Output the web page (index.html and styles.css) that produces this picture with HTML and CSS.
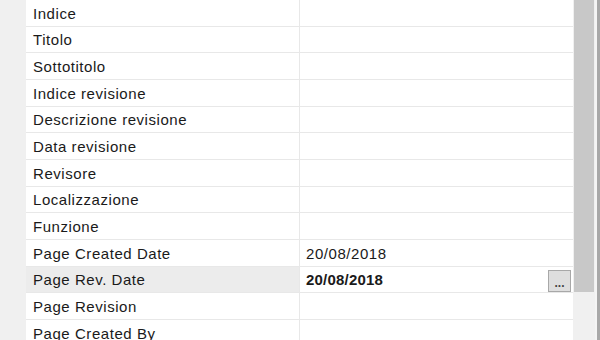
FILE: index.html
```html
<!DOCTYPE html>
<html>
<head>
<meta charset="utf-8">
<link rel="stylesheet" href="styles.css">
</head>
<body>
<div class="panel">
  <div class="gutter"></div>
  <div class="grid">
    <div class="row"><div class="name">Indice</div><div class="value"></div></div>
    <div class="row"><div class="name">Titolo</div><div class="value"></div></div>
    <div class="row"><div class="name">Sottotitolo</div><div class="value"></div></div>
    <div class="row"><div class="name">Indice revisione</div><div class="value"></div></div>
    <div class="row"><div class="name">Descrizione revisione</div><div class="value"></div></div>
    <div class="row"><div class="name">Data revisione</div><div class="value"></div></div>
    <div class="row"><div class="name">Revisore</div><div class="value"></div></div>
    <div class="row"><div class="name">Localizzazione</div><div class="value"></div></div>
    <div class="row"><div class="name">Funzione</div><div class="value"></div></div>
    <div class="row"><div class="name">Page Created Date</div><div class="value">20/08/2018</div></div>
    <div class="row selected"><div class="name">Page Rev. Date</div><div class="value bold">20/08/2018<span class="dots">...</span></div></div>
    <div class="row"><div class="name">Page Revision</div><div class="value"></div></div>
    <div class="row"><div class="name">Page Created By</div><div class="value"></div></div>
  </div>
  <div class="scrollbar"><div class="thumb"></div></div>
  <div class="edge"></div>
</div>
</body>
</html>
```
FILE: styles.css
```css
html, body {
  margin: 0;
  padding: 0;
  background: #ffffff;
  overflow: hidden;
}
.panel {
  display: flex;
  width: 600px;
  height: 340px;
  font-family: "Liberation Sans", Arial, sans-serif;
  font-size: 15px;
  letter-spacing: 0.55px;
  color: #1a1a1a;
}
.gutter {
  width: 26px;
  background: #f0f0f0;
  flex: none;
}
.grid {
  width: 547px;
  flex: none;
  background: #fff;
}
.row {
  display: grid;
  grid-template-columns: 273px 1fr;
  height: 26.67px;
  box-sizing: border-box;
  border-bottom: 1px solid #e8e8e8;
}
.name {
  padding-left: 7px;
  display: flex;
  align-items: center;
  padding-top: 1px;
}
.value {
  border-left: 1px solid #e8e8e8;
  padding-left: 6px;
  display: flex;
  align-items: center;
  padding-top: 1px;
  position: relative;
}
.selected .name {
  background: #ececec;
}
.bold {
  font-weight: bold;
  letter-spacing: 0.2px;
}
.dots {
  position: absolute;
  right: 2px;
  top: 3px;
  width: 23px;
  height: 22px;
  box-sizing: border-box;
  border: 1px solid #a8a8a8;
  background: #dedede;
  font-weight: bold;
  font-size: 12px;
  letter-spacing: 0;
  line-height: 24px;
  text-align: center;
  color: #444;
}
.scrollbar {
  width: 22px;
  flex: none;
  background: #f0f0f0;
}
.thumb {
  height: 292px;
  background: #c8c8c8;
  margin: 0 1px;
}
.edge {
  flex: 1;
  background: linear-gradient(to right, #f4f4f4 0 2px, #a8a8a8 2px);
}
```
